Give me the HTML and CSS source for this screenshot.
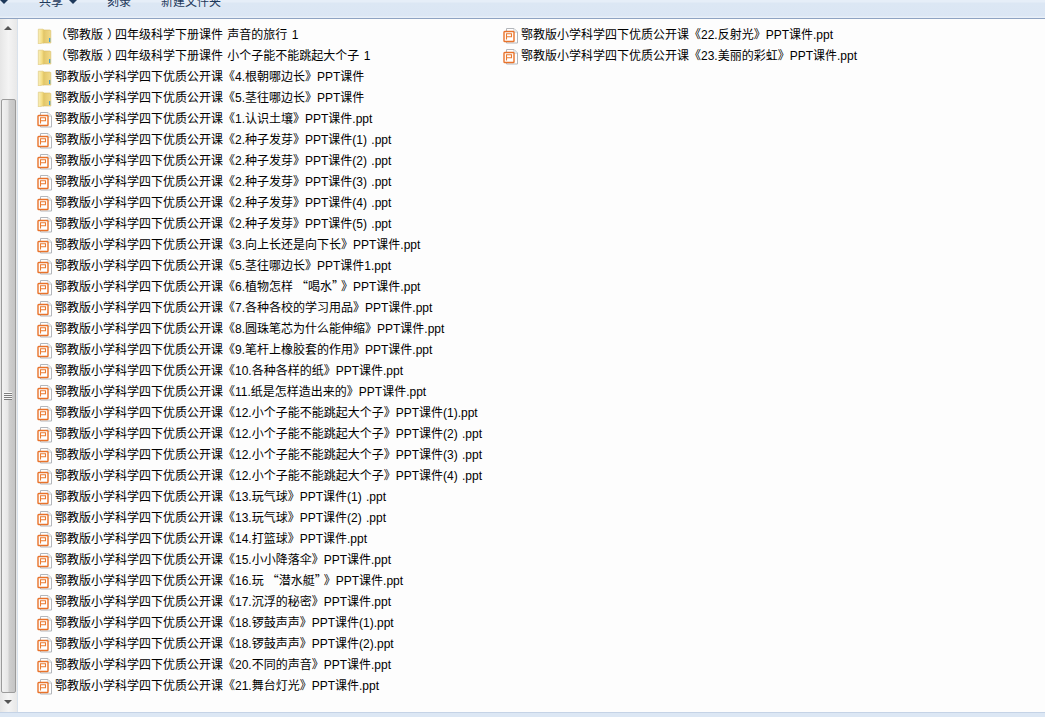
FILE: index.html
```html
<!DOCTYPE html>
<html lang="zh">
<head>
<meta charset="utf-8">
<title>文件夹</title>
<link rel="stylesheet" href="styles.css">
</head>
<body>
<svg class="defs" width="0" height="0" aria-hidden="true">
  <defs>
    <linearGradient id="fg" x1="0" x2="1" y1="0" y2="0">
      <stop offset="0" stop-color="#f9f0bd"/><stop offset="0.6" stop-color="#f5df88"/><stop offset="1" stop-color="#e6c862"/>
    </linearGradient>
    <linearGradient id="fb" x1="0" x2="1" y1="0" y2="0">
      <stop offset="0" stop-color="#e3c664"/><stop offset="1" stop-color="#f0d98a"/>
    </linearGradient>
    <symbol id="folder" viewBox="0 0 16 16">
      <path d="M6 2h7.2l.6.7V15H6z" fill="url(#fb)" stroke="#d8bd68" stroke-width=".6"/>
      <path d="M1.3 1.2h4.6L7 2.2v12.6L1.3 16z" fill="url(#fg)" stroke="#dcc272" stroke-width=".6"/>
      <rect x="12" y="10" width="1.3" height="4" fill="#4aa3c9"/>
    </symbol>
    <symbol id="ppt" viewBox="0 0 16 16">
      <path d="M3.5.5h7.5l3.5 3.5v11h-11z" fill="#fff" stroke="#b3b6bb"/>
      <path d="M10.8.8v3.4h3.4" fill="#eef0f3" stroke="#c2c5c9" stroke-width=".7"/>
      <rect x="1" y="3.5" width="10" height="10" rx=".8" fill="#fff" stroke="#e8722a" stroke-width="1.4"/>
      <path d="M3.5 11.5V5.8h5v3h-5" fill="none" stroke="#ea7a30" stroke-width="1.1"/>
    </symbol>
  </defs>
</svg>
<div class="window">
  <header class="toolbar">
    <span class="tool-arrow edge"></span>
    <span class="tool tool-share">共享<span class="tool-arrow"></span></span>
    <span class="tool tool-burn">刻录</span>
    <span class="tool tool-new">新建文件夹</span>
  </header>
  <div class="main">
    <aside class="scrollbar">
      <span class="arrow up"></span>
      <div class="thumb"><span class="grip"></span></div>
      <span class="arrow down"></span>
    </aside>
    <ul class="files">
      <li class="file"><svg class="icon"><use href="#folder"/></svg><span>（鄂教版<span class="rp">）</span>四年级科学下册课件 声音的旅行 1</span></li>
      <li class="file"><svg class="icon"><use href="#folder"/></svg><span>（鄂教版<span class="rp">）</span>四年级科学下册课件 小个子能不能跳起大个子 1</span></li>
      <li class="file"><svg class="icon"><use href="#folder"/></svg>鄂教版小学科学四下优质公开课《4.根朝哪边长》PPT课件</li>
      <li class="file"><svg class="icon"><use href="#folder"/></svg>鄂教版小学科学四下优质公开课《5.茎往哪边长》PPT课件</li>
      <li class="file"><svg class="icon"><use href="#ppt"/></svg>鄂教版小学科学四下优质公开课《1.认识土壤》PPT课件.ppt</li>
      <li class="file"><svg class="icon"><use href="#ppt"/></svg>鄂教版小学科学四下优质公开课《2.种子发芽》PPT课件(1) .ppt</li>
      <li class="file"><svg class="icon"><use href="#ppt"/></svg>鄂教版小学科学四下优质公开课《2.种子发芽》PPT课件(2) .ppt</li>
      <li class="file"><svg class="icon"><use href="#ppt"/></svg>鄂教版小学科学四下优质公开课《2.种子发芽》PPT课件(3) .ppt</li>
      <li class="file"><svg class="icon"><use href="#ppt"/></svg>鄂教版小学科学四下优质公开课《2.种子发芽》PPT课件(4) .ppt</li>
      <li class="file"><svg class="icon"><use href="#ppt"/></svg>鄂教版小学科学四下优质公开课《2.种子发芽》PPT课件(5) .ppt</li>
      <li class="file"><svg class="icon"><use href="#ppt"/></svg>鄂教版小学科学四下优质公开课《3.向上长还是向下长》PPT课件.ppt</li>
      <li class="file"><svg class="icon"><use href="#ppt"/></svg>鄂教版小学科学四下优质公开课《5.茎往哪边长》PPT课件1.ppt</li>
      <li class="file"><svg class="icon"><use href="#ppt"/></svg><span>鄂教版小学科学四下优质公开课《6.植物怎样<span class="cjk">“喝水”</span>》PPT课件.ppt</span></li>
      <li class="file"><svg class="icon"><use href="#ppt"/></svg>鄂教版小学科学四下优质公开课《7.各种各校的学习用品》PPT课件.ppt</li>
      <li class="file"><svg class="icon"><use href="#ppt"/></svg>鄂教版小学科学四下优质公开课《8.圆珠笔芯为什么能伸缩》PPT课件.ppt</li>
      <li class="file"><svg class="icon"><use href="#ppt"/></svg>鄂教版小学科学四下优质公开课《9.笔杆上橡胶套的作用》PPT课件.ppt</li>
      <li class="file"><svg class="icon"><use href="#ppt"/></svg>鄂教版小学科学四下优质公开课《10.各种各样的纸》PPT课件.ppt</li>
      <li class="file"><svg class="icon"><use href="#ppt"/></svg>鄂教版小学科学四下优质公开课《11.纸是怎样造出来的》PPT课件.ppt</li>
      <li class="file"><svg class="icon"><use href="#ppt"/></svg>鄂教版小学科学四下优质公开课《12.小个子能不能跳起大个子》PPT课件(1).ppt</li>
      <li class="file"><svg class="icon"><use href="#ppt"/></svg>鄂教版小学科学四下优质公开课《12.小个子能不能跳起大个子》PPT课件(2) .ppt</li>
      <li class="file"><svg class="icon"><use href="#ppt"/></svg>鄂教版小学科学四下优质公开课《12.小个子能不能跳起大个子》PPT课件(3) .ppt</li>
      <li class="file"><svg class="icon"><use href="#ppt"/></svg>鄂教版小学科学四下优质公开课《12.小个子能不能跳起大个子》PPT课件(4) .ppt</li>
      <li class="file"><svg class="icon"><use href="#ppt"/></svg>鄂教版小学科学四下优质公开课《13.玩气球》PPT课件(1) .ppt</li>
      <li class="file"><svg class="icon"><use href="#ppt"/></svg>鄂教版小学科学四下优质公开课《13.玩气球》PPT课件(2) .ppt</li>
      <li class="file"><svg class="icon"><use href="#ppt"/></svg>鄂教版小学科学四下优质公开课《14.打篮球》PPT课件.ppt</li>
      <li class="file"><svg class="icon"><use href="#ppt"/></svg>鄂教版小学科学四下优质公开课《15.小小降落伞》PPT课件.ppt</li>
      <li class="file"><svg class="icon"><use href="#ppt"/></svg><span>鄂教版小学科学四下优质公开课《16.玩<span class="cjk">“潜水艇”</span>》PPT课件.ppt</span></li>
      <li class="file"><svg class="icon"><use href="#ppt"/></svg>鄂教版小学科学四下优质公开课《17.沉浮的秘密》PPT课件.ppt</li>
      <li class="file"><svg class="icon"><use href="#ppt"/></svg>鄂教版小学科学四下优质公开课《18.锣鼓声声》PPT课件(1).ppt</li>
      <li class="file"><svg class="icon"><use href="#ppt"/></svg>鄂教版小学科学四下优质公开课《18.锣鼓声声》PPT课件(2).ppt</li>
      <li class="file"><svg class="icon"><use href="#ppt"/></svg>鄂教版小学科学四下优质公开课《20.不同的声音》PPT课件.ppt</li>
      <li class="file"><svg class="icon"><use href="#ppt"/></svg>鄂教版小学科学四下优质公开课《21.舞台灯光》PPT课件.ppt</li>
      <li class="file"><svg class="icon"><use href="#ppt"/></svg>鄂教版小学科学四下优质公开课《22.反射光》PPT课件.ppt</li>
      <li class="file"><svg class="icon"><use href="#ppt"/></svg>鄂教版小学科学四下优质公开课《23.美丽的彩虹》PPT课件.ppt</li>
    </ul>
  </div>
  <footer class="bottom"></footer>
</div>
</body>
</html>
```
FILE: styles.css
```css
* { box-sizing: border-box; }
html, body { margin: 0; height: 100%; overflow: hidden; }
body {
  font-family: "Liberation Sans", "Noto Sans CJK SC", sans-serif;
  font-size: 12px;
  color: #000;
  background: #fdfdfd;
}
.defs { position: absolute; }
.window { display: flex; flex-direction: column; height: 717px; }
.toolbar {
  flex: none;
  display: flex;
  height: 19px;
  background: linear-gradient(#e6eef8 0, #e6eef8 2px, #dce7f4 3px, #dbe6f4 16px, #e8eff8 17px);
  border-bottom: 1px solid #8fa3c2;
  overflow: hidden;
  color: #1e395b;
  font-size: 12px;
  line-height: 12px;
  position: relative;
}
.tool { display: flex; align-items: flex-start; margin-top: -4px; white-space: nowrap; }
.tool-share { margin-left: 31px; }
.tool-burn { margin-left: 30px; }
.tool-new { margin-left: 30px; }
.tool-arrow {
  width: 0; height: 0; margin: 4px 0 0 6px;
  border: 4px solid transparent;
  border-top: 4px solid #1e395b;
  border-bottom: 0;
}
.edge { margin: 0; flex: none; }
.main { flex: 1; display: flex; min-height: 0; }
.scrollbar {
  flex: none;
  width: 18px;
  display: flex;
  flex-direction: column;
  align-items: center;
  padding: 0 1px 0 0;
  background: linear-gradient(90deg, #e6e6e6, #f4f4f4 50%, #e8e8e8);
  border-right: 1px solid #d9e2ec;
}
.arrow { width: 0; height: 0; border: 4px solid transparent; flex: none; }
.arrow.up { border-top: 0; border-bottom: 4px solid #555; margin: 7px 0 0; }
.arrow.down { border-bottom: 0; border-top: 4px solid #555; margin: 7px 0 0; }
.thumb {
  flex: none;
  width: 15px;
  height: 594px;
  margin-top: 69px;
  display: flex;
  align-items: center;
  justify-content: center;
  background: linear-gradient(90deg, #f2f2f2, #e6e6e6 45%, #cfcfcf 55%, #c4c4c4);
  border: 1px solid #9b9b9b;
  border-radius: 2px;
}
.grip {
  width: 8px;
  height: 8px;
  background: repeating-linear-gradient(#f7f7f7 0, #f7f7f7 1px, #7c7c7c 1px, #7c7c7c 2px);
}
.files {
  flex: 1;
  list-style: none;
  margin: 0;
  padding: 6px 0 0 19px;
  display: grid;
  grid-auto-flow: column;
  grid-template-rows: repeat(32, 21px);
  grid-auto-columns: 466px;
  background: #fdfdfd;
  word-spacing: 1px;
}
.file { display: flex; align-items: center; white-space: pre; height: 21px; line-height: 21px; }
.icon { flex: none; width: 16px; height: 16px; margin-right: 2px; }
.cjk { font-family: "Noto Sans CJK SC", sans-serif; line-height: 0; margin: 0 3px; }
.rp { padding-left: 4px; letter-spacing: -4px; }
.bottom {
  flex: none;
  height: 5px;
  background: #dce7f4;
  border-top: 1px solid #c5d3e6;
}
```
